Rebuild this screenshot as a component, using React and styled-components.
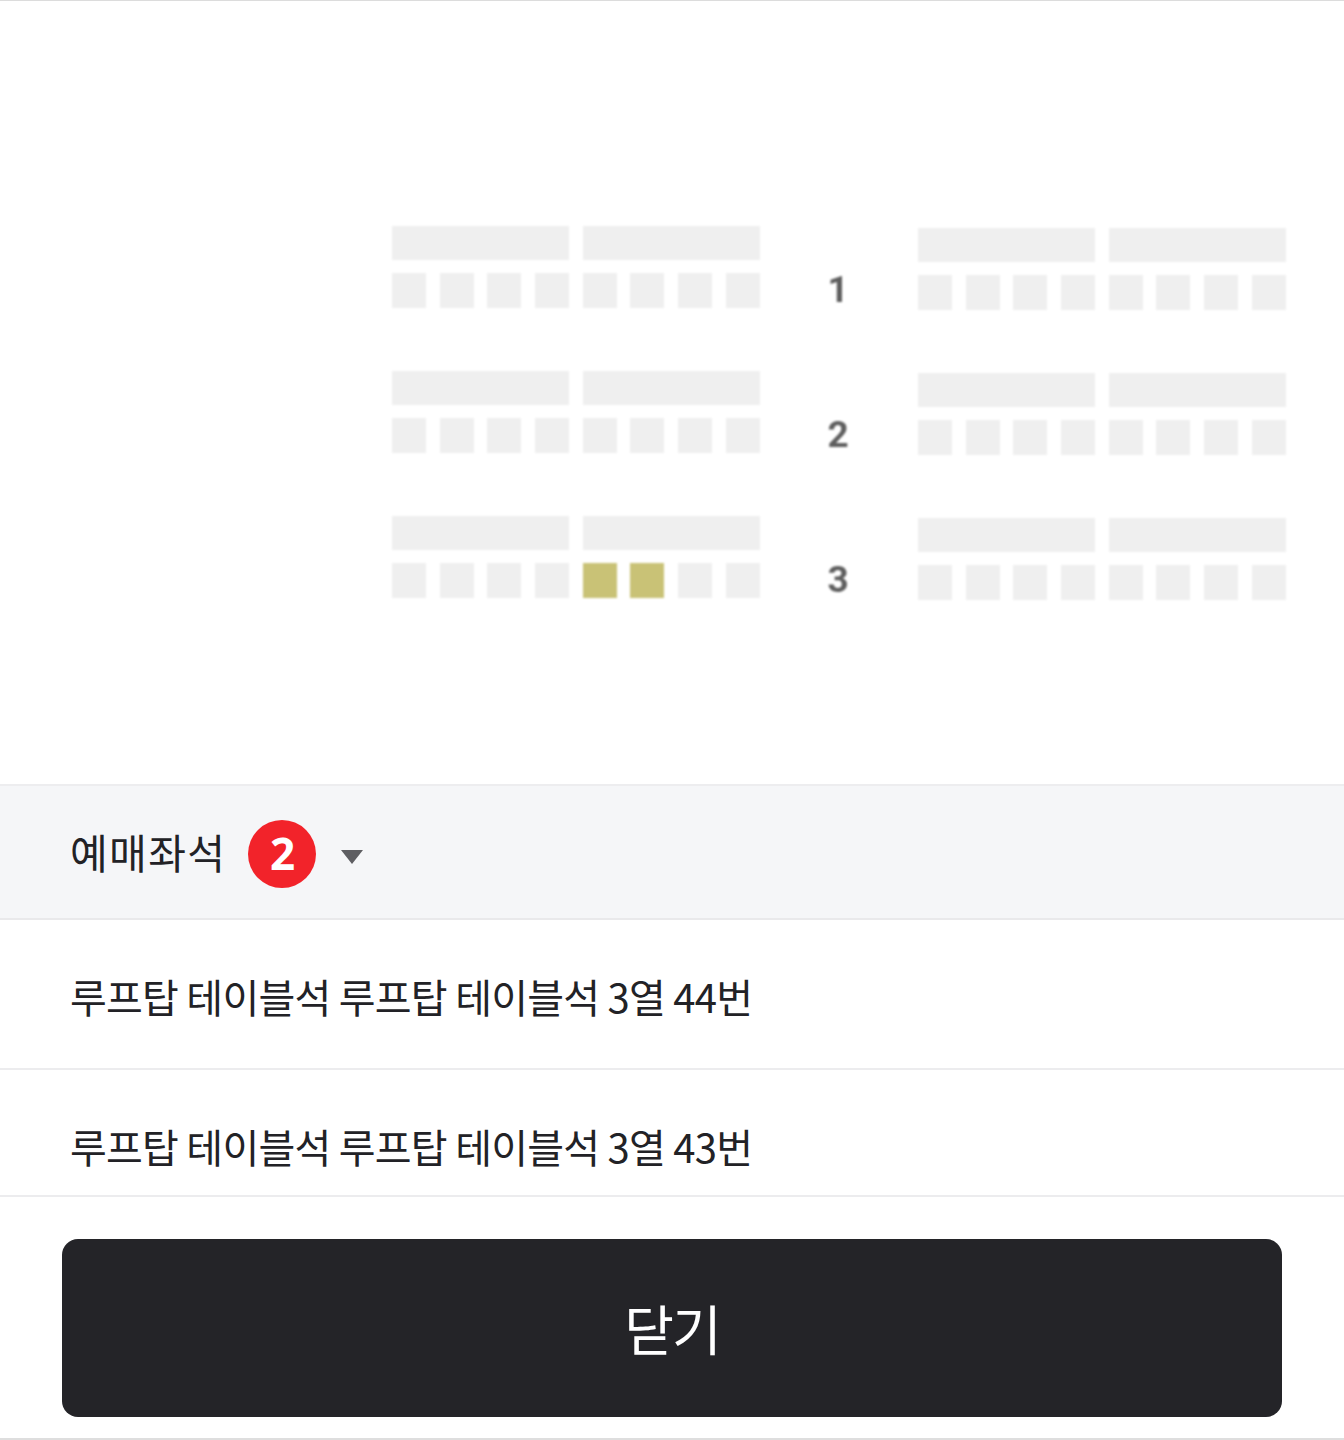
import React from "react";
import styled, { createGlobalStyle } from "styled-components";

const Global = createGlobalStyle`
  * { box-sizing: border-box; }
  html, body { margin: 0; padding: 0; background: #ffffff; }
  body {
    font-family: "Noto Sans CJK KR", "Noto Sans", sans-serif;
    color: #222226;
  }
`;

const Page = styled.div`
  width: 1344px;
  height: 1440px;
  display: flex;
  flex-direction: column;
  border-top: 1px solid #dcdcdc;
  overflow: hidden;
`;

const SeatMap = styled.div`
  height: 783px;
  display: flex;
  flex-direction: column;
  gap: 61px;
  padding: 225px 56px 0 392px;
  filter: blur(1.3px);
`;

const SeatRow = styled.div`
  display: grid;
  grid-template-columns: 370px 156px 370px;
  align-items: start;
`;

const Block = styled.div`
  display: grid;
  grid-template-columns: repeat(8, 34px);
  column-gap: 13.7px;
  row-gap: 13px;
  margin-top: ${(p) => (p.$shift ? "2px" : "0")};
`;

const Bar = styled.div`
  grid-column: span 4;
  height: 34px;
  background: #efefef;
`;

const Seat = styled.div`
  width: 34px;
  height: 35px;
  background: ${(p) => (p.$selected ? "#c9c276" : "#efefef")};
`;

const RowNumber = styled.div`
  padding-top: 44px;
  text-align: center;
  font-family: "Roboto", "Liberation Sans", sans-serif;
  font-weight: 700;
  font-size: 37px;
  line-height: 40px;
  color: #5e5e5e;
  padding-right: 4px;
`;

const Header = styled.div`
  height: 136px;
  display: flex;
  align-items: center;
  gap: 22px;
  padding-left: 70px;
  background: #f5f6f8;
  border-top: 2px solid #ededef;
  border-bottom: 2px solid #e9e9eb;
`;

const HeaderTitle = styled.span`
  font-size: 41px;
  letter-spacing: 1.4px;
  line-height: 1;
  color: #222226;
  margin-top: -2px;
`;

const Badge = styled.span`
  width: 68px;
  height: 68px;
  border-radius: 50%;
  background: #f2232a;
  color: #ffffff;
  display: flex;
  align-items: center;
  justify-content: center;
  font-family: "Noto Sans", "Roboto", sans-serif;
  font-weight: 700;
  font-size: 44px;
  line-height: 1;
  padding-bottom: 2px;
  margin-top: 4px;
`;

const Caret = styled.svg`
  width: 24px;
  height: 16px;
  margin-left: 2px;
  margin-top: 10px;
`;

const SeatItem = styled.div`
  height: ${(p) => p.$h}px;
  flex-shrink: 0;
  padding: 56px 0 0 70px;
  font-size: 40px;
  line-height: 1;
  letter-spacing: -0.75px;
  color: #222226;
  border-bottom: 2px solid #ececee;
`;

const Footer = styled.div`
  flex: 1;
  padding: 42px 62px 0;
  border-bottom: 2px solid #dedede;
`;

const CloseButton = styled.button`
  width: 100%;
  height: 178px;
  border: none;
  border-radius: 16px;
  background: #242428;
  color: #ffffff;
  font-family: "Noto Sans CJK KR", "Noto Sans", sans-serif;
  font-size: 54px;
  letter-spacing: -2px;
  line-height: 1;
  padding: 0;
  cursor: pointer;
`;

const rows = [
  { num: 1, selected: [] },
  { num: 2, selected: [] },
  { num: 3, selected: [4, 5] },
];

function SeatBlock({ selected = [], shift }) {
  return (
    <Block $shift={shift}>
      <Bar />
      <Bar />
      {Array.from({ length: 8 }, (_, i) => (
        <Seat key={i} $selected={selected.includes(i)} />
      ))}
    </Block>
  );
}

export default function App() {
  return (
    <>
      <Global />
      <Page>
        <SeatMap>
          {rows.map((r) => (
            <SeatRow key={r.num}>
              <SeatBlock selected={r.selected} />
              <RowNumber>{r.num}</RowNumber>
              <SeatBlock shift />
            </SeatRow>
          ))}
        </SeatMap>
        <Header>
          <HeaderTitle>예매좌석</HeaderTitle>
          <Badge>2</Badge>
          <Caret viewBox="0 0 24 16">
            <path d="M1 1 L23 1 L12 15 Z" fill="#5e5e62" />
          </Caret>
        </Header>
        <SeatItem $h={150}>루프탑 테이블석 루프탑 테이블석 3열 44번</SeatItem>
        <SeatItem $h={127}>루프탑 테이블석 루프탑 테이블석 3열 43번</SeatItem>
        <Footer>
          <CloseButton>닫기</CloseButton>
        </Footer>
      </Page>
    </>
  );
}
